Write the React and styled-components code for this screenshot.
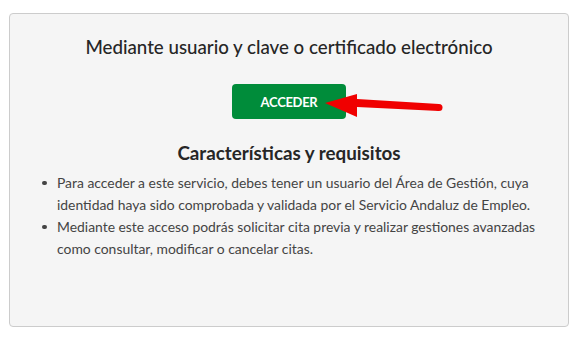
import React from 'react';
import styled, { createGlobalStyle } from 'styled-components';

const GlobalStyle = createGlobalStyle`
  html, body {
    margin: 0;
    padding: 0;
    background: #ffffff;
  }
  body {
    font-family: Lato, 'Liberation Sans', sans-serif;
    color: #333333;
  }
`;

const Page = styled.div`
  padding: 13px 11px 10px 9px;
`;

const Card = styled.section`
  box-sizing: border-box;
  width: 560px;
  height: 314px;
  background: #f5f5f5;
  border: 1px solid #cccccc;
  border-radius: 4px;
  padding: 21px 20px 0;
  display: flex;
  flex-direction: column;
  align-items: center;
`;

const Title = styled.h2`
  margin: 0;
  font-size: 18.7px;
  font-weight: 500;
  line-height: 24px;
  color: #262626;
  text-align: center;
`;

const ButtonRow = styled.div`
  position: relative;
  margin-top: 25px;
`;

const AccessButton = styled.button`
  display: block;
  width: 114px;
  height: 35px;
  border: none;
  border-radius: 4px;
  background: #008c3a;
  color: #ffffff;
  font-family: Lato, 'Liberation Sans', sans-serif;
  font-weight: 700;
  font-size: 13px;
  letter-spacing: -0.3px;
  cursor: pointer;
`;

const Arrow = styled.svg`
  position: absolute;
  left: 93px;
  top: 6px;
  width: 120px;
  height: 30px;
  overflow: visible;
`;

const Subtitle = styled.h3`
  margin: 22px 0 0;
  font-size: 18.8px;
  font-weight: 700;
  line-height: 24px;
  color: #262626;
  text-align: center;
`;

const List = styled.ul`
  align-self: stretch;
  list-style: none;
  margin: 7px 0 0;
  padding: 0 0 0 12px;
  font-size: 13.9px;
  line-height: 22px;
  color: #444444;
`;

const Item = styled.li`
  display: flex;
`;

const Bullet = styled.span`
  flex: none;
  width: 15px;
  display: flex;
  align-items: center;
  height: 22px;

  &::before {
    content: '';
    width: 4.5px;
    height: 4.5px;
    border-radius: 50%;
    background: #444444;
  }
`;

export default function App() {
  return (
    <>
      <GlobalStyle />
      <Page>
        <Card>
          <Title>Mediante usuario y clave o certificado electrónico</Title>
          <ButtonRow>
            <AccessButton>ACCEDER</AccessButton>
            <Arrow viewBox="0 0 120 30">
              <polygon points="0,13 32,4 32,9 114,14 114,21 32,17 32,27" fill="#f00000" />
              <circle cx="114" cy="17.5" r="3.5" fill="#f00000" />
            </Arrow>
          </ButtonRow>
          <Subtitle>Características y requisitos</Subtitle>
          <List>
            <Item>
              <Bullet />
              <span>
                Para acceder a este servicio, debes tener un usuario del Área de Gestión, cuya
                identidad haya sido comprobada y validada por el Servicio Andaluz de Empleo.
              </span>
            </Item>
            <Item>
              <Bullet />
              <span>
                Mediante este acceso podrás solicitar cita previa y realizar gestiones avanzadas
                como consultar, modificar o cancelar citas.
              </span>
            </Item>
          </List>
        </Card>
      </Page>
    </>
  );
}
